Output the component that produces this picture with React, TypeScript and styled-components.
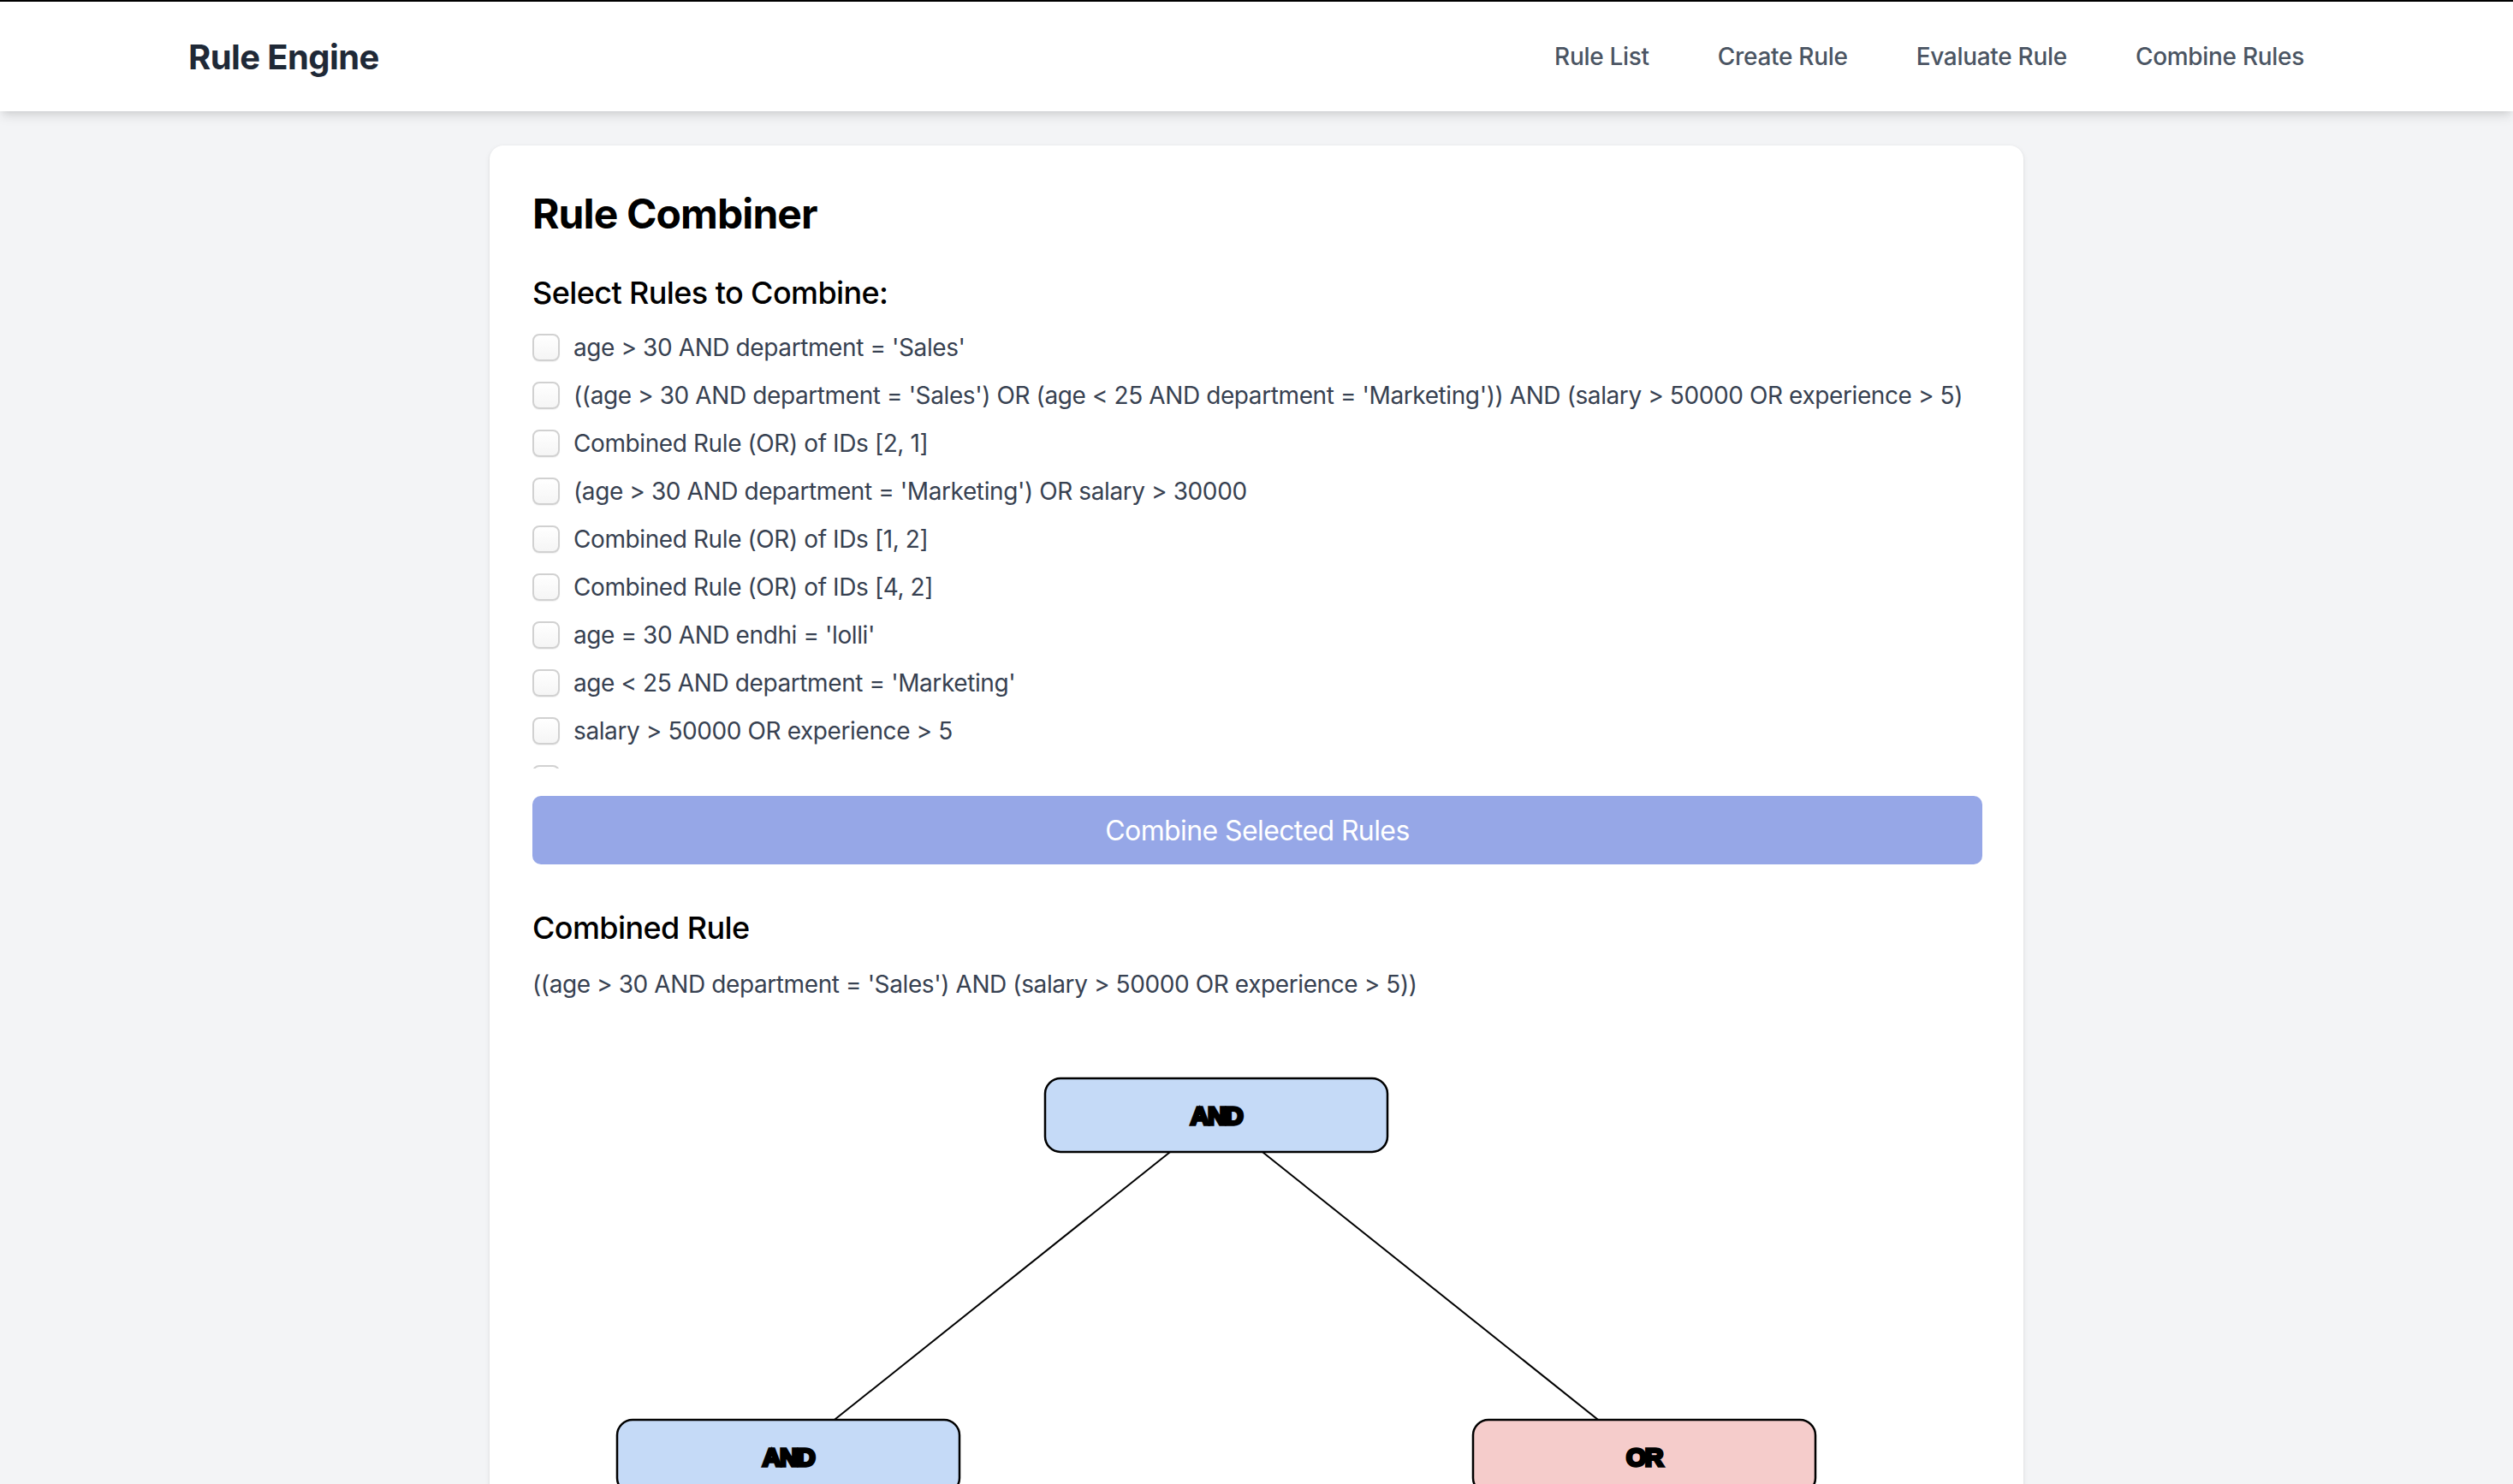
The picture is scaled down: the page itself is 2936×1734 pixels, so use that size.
import React, { useState } from "react";
import styled, { createGlobalStyle } from "styled-components";

const GlobalStyle = createGlobalStyle`
  html, body {
    margin: 0;
    padding: 0;
    background: #f3f4f6;
    font-family: Inter, "Noto Sans", "Liberation Sans", sans-serif;
  }
  * {
    box-sizing: border-box;
  }
`;

const Page = styled.div`
  min-height: 100vh;
  border-top: 2px solid #000;
  background: #f3f4f6;
`;

const NavBar = styled.nav`
  background: #ffffff;
  box-shadow: 0 8px 12px -2px rgba(0, 0, 0, 0.1), 0 4px 8px -4px rgba(0, 0, 0, 0.1);
  position: relative;
  z-index: 1;
`;

const NavInner = styled.div`
  max-width: 2560px;
  margin: 0 auto;
  padding: 0 32px;
  height: 128px;
  display: flex;
  align-items: center;
  justify-content: space-between;
`;

const Brand = styled.div`
  font-size: 40px;
  font-weight: 700;
  color: #1f2937;
  letter-spacing: -0.6px;
`;

const NavLinks = styled.div`
  display: flex;
  align-items: center;
  gap: 32px;
`;

const NavLink = styled.a`
  padding: 16px 24px;
  font-size: 28px;
  font-weight: 500;
  color: #4b5563;
  text-decoration: none;
  cursor: pointer;
  letter-spacing: -0.3px;
`;

const Main = styled.main`
  padding-top: 40px;
`;

const Card = styled.div`
  max-width: 1792px;
  margin: 0 auto;
  background: #ffffff;
  border-radius: 16px;
  box-shadow: 0 2px 6px rgba(0, 0, 0, 0.08), 0 1px 3px rgba(0, 0, 0, 0.06);
  padding: 48px 48px 48px 50px;
`;

const Title = styled.h1`
  margin: 0 0 32px;
  font-size: 48px;
  line-height: 64px;
  font-weight: 700;
  color: #000;
  letter-spacing: -0.9px;
`;

const SubTitle = styled.h2`
  margin: 0 0 16px;
  font-size: 36px;
  line-height: 56px;
  font-weight: 500;
  color: #000;
  letter-spacing: -0.6px;
`;

const RuleList = styled.div`
  max-height: 512px;
  overflow-y: hidden;
  display: flex;
  flex-direction: column;
  gap: 16px;
`;

const RuleRow = styled.label`
  display: flex;
  align-items: center;
  gap: 16px;
  min-height: 40px;
  font-size: 28px;
  line-height: 40px;
  color: #374151;
  cursor: pointer;
  letter-spacing: -0.4px;
  white-space: nowrap;
`;

const CheckBox = styled.input`
  appearance: none;
  flex: 0 0 auto;
  width: 32px;
  height: 32px;
  margin: 0;
  border: 2px solid #d1d1d1;
  border-radius: 8px;
  background: linear-gradient(#ffffff, #f5f5f5);
  box-shadow: 0 1px 1px rgba(0, 0, 0, 0.06);
  cursor: pointer;

  &:checked {
    background: #3b82f6;
    border-color: #3b82f6;
  }
`;

const CombineButton = styled.button`
  display: block;
  width: 100%;
  margin-top: 32px;
  height: 80px;
  border: none;
  border-radius: 10px;
  background: #96a7e7;
  color: #ffffff;
  font-family: inherit;
  font-size: 32px;
  letter-spacing: -0.6px;
  cursor: not-allowed;
`;

const ResultHeading = styled.h3`
  margin: 46px 0 0;
  font-size: 36px;
  line-height: 56px;
  font-weight: 500;
  color: #000;
  letter-spacing: -0.6px;
`;

const Expression = styled.p`
  margin: 18px 0 0;
  font-size: 28px;
  line-height: 40px;
  color: #374151;
  letter-spacing: -0.4px;
`;

const TreeWrap = styled.div`
  margin-top: 38px;
  height: 1000px;
`;

const TreeSvg = styled.svg`
  display: block;
  width: 100%;
  height: 100%;
`;

const rules = [
  "age > 30 AND department = 'Sales'",
  "((age > 30 AND department = 'Sales') OR (age < 25 AND department = 'Marketing')) AND (salary > 50000 OR experience > 5)",
  "Combined Rule (OR) of IDs [2, 1]",
  "(age > 30 AND department = 'Marketing') OR salary > 30000",
  "Combined Rule (OR) of IDs [1, 2]",
  "Combined Rule (OR) of IDs [4, 2]",
  "age = 30 AND endhi = 'lolli'",
  "age < 25 AND department = 'Marketing'",
  "salary > 50000 OR experience > 5",
  "Combined Rule (AND) of IDs [1, 9]",
];

type TreeNode = {
  label: string;
  x: number;
  y: number;
  fill: string;
};

const NODE_W = 400;
const NODE_H = 86;

const nodes: TreeNode[] = [
  { label: "AND", x: 799, y: 95, fill: "#c5daf7" },
  { label: "AND", x: 299, y: 494, fill: "#c5daf7" },
  { label: "OR", x: 1299, y: 494, fill: "#f5cccb" },
];

const edges: Array<[number, number]> = [
  [0, 1],
  [0, 2],
];

const RuleTree = () => (
  <TreeSvg viewBox="0 0 1694 1000" preserveAspectRatio="xMinYMin meet">
    {edges.map(([a, b]) => (
      <line
        key={`${a}-${b}`}
        x1={nodes[a].x}
        y1={nodes[a].y}
        x2={nodes[b].x}
        y2={nodes[b].y}
        stroke="#000"
        strokeWidth={2}
      />
    ))}
    {nodes.map((n, i) => (
      <g key={i}>
        <rect
          x={n.x - NODE_W / 2}
          y={n.y - NODE_H / 2}
          width={NODE_W}
          height={NODE_H}
          rx={18}
          fill={n.fill}
          stroke="#000"
          strokeWidth={2.5}
        />
        <text
          x={n.x}
          y={n.y}
          dy="0.36em"
          textAnchor="middle"
          fontFamily="'Liberation Sans', Arial, sans-serif"
          fontWeight={700}
          fontSize={30}
          fill="#000"
          stroke="#000"
          strokeWidth={3.5}
          letterSpacing={-1.5}
        >
          {n.label}
        </text>
      </g>
    ))}
  </TreeSvg>
);

export default function App() {
  const [selected, setSelected] = useState<number[]>([]);

  const toggle = (idx: number) => {
    setSelected((prev) =>
      prev.includes(idx) ? prev.filter((p) => p !== idx) : [...prev, idx]
    );
  };

  return (
    <Page>
      <GlobalStyle />
      <NavBar>
        <NavInner>
          <Brand>Rule Engine</Brand>
          <NavLinks>
            <NavLink>Rule List</NavLink>
            <NavLink>Create Rule</NavLink>
            <NavLink>Evaluate Rule</NavLink>
            <NavLink>Combine Rules</NavLink>
          </NavLinks>
        </NavInner>
      </NavBar>
      <Main>
        <Card>
          <Title>Rule Combiner</Title>
          <SubTitle>Select Rules to Combine:</SubTitle>
          <RuleList>
            {rules.map((r, i) => (
              <RuleRow key={i}>
                <CheckBox
                  type="checkbox"
                  checked={selected.includes(i)}
                  onChange={() => toggle(i)}
                />
                {r}
              </RuleRow>
            ))}
          </RuleList>
          <CombineButton disabled={selected.length < 2}>
            Combine Selected Rules
          </CombineButton>
          <ResultHeading>Combined Rule</ResultHeading>
          <Expression>
            ((age &gt; 30 AND department = 'Sales') AND (salary &gt; 50000 OR
            experience &gt; 5))
          </Expression>
          <TreeWrap>
            <RuleTree />
          </TreeWrap>
        </Card>
      </Main>
    </Page>
  );
}
